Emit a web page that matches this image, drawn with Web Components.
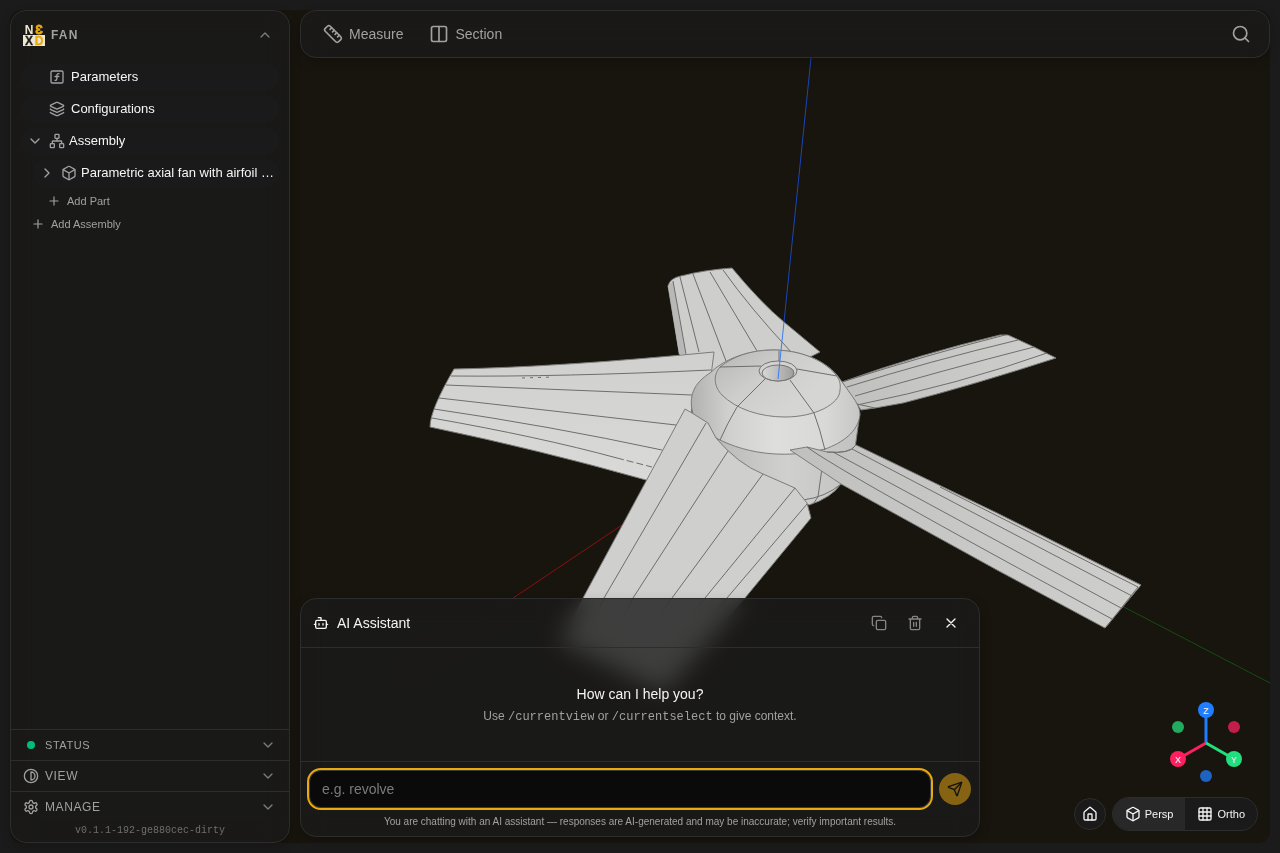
<!DOCTYPE html>
<html lang="en">
<head>
<meta charset="utf-8">
<meta name="viewport" content="width=device-width, initial-scale=1">
<title>FAN</title>
<style>
  html, body { height: 100%; margin: 0; }
  body {
    background: #1b1b1b;
    color: #f5f5f5;
    font-family: "Liberation Sans", Arial, sans-serif;
    font-size: 13px;
    --panel: rgba(26, 26, 26, .8);
    --line: #2d2d2c;
    --muted: #a1a1a1;
    --amber: #e9a90f;
  }
</style>
</head>
<body>
<cad-app></cad-app>
<script>
const define = (name, html, setup) => {
  const tpl = document.createElement('template');
  tpl.innerHTML = html;
  customElements.define(name, class extends HTMLElement {
    constructor() {
      super();
      this.attachShadow({ mode: 'open' }).append(tpl.content.cloneNode(true));
    }
    connectedCallback() { if (setup) setup(this, this.shadowRoot); }
  });
};

const BUTTON = `button{all:unset;box-sizing:border-box;cursor:pointer}button:focus-visible{outline:2px solid var(--amber)}`;
const PANEL = `box-sizing:border-box;border:1px solid var(--line);border-radius:16px;background:var(--panel);backdrop-filter:blur(12px);box-shadow:0 4px 12px rgba(0,0,0,.2);`;

const ICONS = {
  up: '<path d="m18 15-6-6-6 6"/>',
  down: '<path d="m6 9 6 6 6-6"/>',
  right: '<path d="m9 18 6-6-6-6"/>',
  plus: '<path d="M5 12h14M12 5v14"/>',
  func: '<rect width="18" height="18" x="3" y="3" rx="2"/><path d="M9 17c2 0 2.800-1 2.800-2.800V10c0-2 1-3.300 3.200-3M9 11.200h5.700"/>',
  layers: '<path d="M12.830 2.180a2 2 0 0 0-1.660 0L2.600 6.080a1 1 0 0 0 0 1.830l8.580 3.910a2 2 0 0 0 1.660 0l8.580-3.900a1 1 0 0 0 0-1.830z"/><path d="M2 12a1 1 0 0 0 .58.91l8.600 3.910a2 2 0 0 0 1.650 0l8.580-3.900A1 1 0 0 0 22 12M2 17a1 1 0 0 0 .58.91l8.600 3.910a2 2 0 0 0 1.650 0l8.580-3.900A1 1 0 0 0 22 17"/>',
  network: '<rect x="16" y="16" width="6" height="6" rx="1"/><rect x="2" y="16" width="6" height="6" rx="1"/><rect x="9" y="2" width="6" height="6" rx="1"/><path d="M5 16v-3a1 1 0 0 1 1-1h12a1 1 0 0 1 1 1v3M12 12V8"/>',
  box: '<path d="M21 8a2 2 0 0 0-1-1.730l-7-4a2 2 0 0 0-2 0l-7 4A2 2 0 0 0 3 8v8a2 2 0 0 0 1 1.730l7 4a2 2 0 0 0 2 0l7-4A2 2 0 0 0 21 16Z"/><path d="m3.300 7 8.700 5 8.700-5M12 22V12"/>',
  ruler: '<path d="M21.300 15.300a2.400 2.400 0 0 1 0 3.400l-2.600 2.600a2.400 2.400 0 0 1-3.400 0L2.700 8.700a2.410 2.410 0 0 1 0-3.400l2.600-2.600a2.410 2.410 0 0 1 3.400 0Z"/><path d="m14.500 12.500 2-2M11.500 9.500l2-2M8.500 6.500l2-2M17.500 15.500l2-2"/>',
  columns: '<rect width="18" height="18" x="3" y="3" rx="2"/><path d="M12 3v18"/>',
  search: '<circle cx="11" cy="11" r="8"/><path d="m21 21-4.300-4.300"/>',
  contrast: '<circle cx="12" cy="12" r="10"/><path d="M12 18a6 6 0 0 0 0-12v12z"/>',
  settings: '<path d="M12.220 2h-.44a2 2 0 0 0-2 2v.18a2 2 0 0 1-1 1.730l-.43.25a2 2 0 0 1-2 0l-.15-.08a2 2 0 0 0-2.730.73l-.22.38a2 2 0 0 0 .73 2.730l.15.1a2 2 0 0 1 1 1.720v.51a2 2 0 0 1-1 1.740l-.15.09a2 2 0 0 0-.73 2.730l.22.38a2 2 0 0 0 2.730.73l.15-.08a2 2 0 0 1 2 0l.43.25a2 2 0 0 1 1 1.730V20a2 2 0 0 0 2 2h.44a2 2 0 0 0 2-2v-.18a2 2 0 0 1 1-1.730l.43-.25a2 2 0 0 1 2 0l.15.08a2 2 0 0 0 2.730-.73l.22-.39a2 2 0 0 0-.73-2.730l-.15-.08a2 2 0 0 1-1-1.740v-.5a2 2 0 0 1 1-1.740l.15-.09a2 2 0 0 0 .73-2.730l-.22-.38a2 2 0 0 0-2.730-.73l-.15.08a2 2 0 0 1-2 0l-.43-.25a2 2 0 0 1-1-1.730V4a2 2 0 0 0-2-2z"/><circle cx="12" cy="12" r="3"/>',
  bot: '<path d="M12 8V4H8"/><rect width="16" height="12" x="4" y="8" rx="2"/><path d="M2 14h2M20 14h2M15 13v2M9 13v2"/>',
  copy: '<rect width="14" height="14" x="8" y="8" rx="2"/><path d="M4 16c-1.100 0-2-.9-2-2V4c0-1.100.9-2 2-2h10c1.100 0 2 .9 2 2"/>',
  trash: '<path d="M3 6h18M19 6v14c0 1-1 2-2 2H7c-1 0-2-1-2-2V6M8 6V4c0-1 1-2 2-2h4c1 0 2 1 2 2v2M10 11v6M14 11v6"/>',
  x: '<path d="M18 6 6 18M6 6l12 12"/>',
  send: '<path d="M14.536 21.686a.5.5 0 0 0 .937-.024l6.500-19a.496.496 0 0 0-.635-.635l-19 6.500a.5.5 0 0 0-.024.937l7.930 3.180a2 2 0 0 1 1.112 1.110z"/><path d="m21.854 2.147-10.940 10.939"/>',
  home: '<path d="M15 21v-8a1 1 0 0 0-1-1h-4a1 1 0 0 0-1 1v8"/><path d="M3 10a2 2 0 0 1 .709-1.528l7-5.999a2 2 0 0 1 2.582 0l7 5.999A2 2 0 0 1 21 10v9a2 2 0 0 1-2 2H5a2 2 0 0 1-2-2z"/>',
  grid: '<rect width="18" height="18" x="3" y="3" rx="2"/><path d="M3 9h18M3 15h18M9 3v18M15 3v18"/>'
};

define('ui-icon', `
<style>
  :host { display: block; flex: none; width: 16px; height: 16px; }
  :host([size="14"]) { width: 14px; height: 14px; }
  :host([size="20"]) { width: 20px; height: 20px; }
  svg { display: block; width: 100%; height: 100%; fill: none; stroke: currentColor; stroke-width: 2; stroke-linecap: round; stroke-linejoin: round; }
</style>
<svg viewBox="0 0 24 24" aria-hidden="true"></svg>`,
(el, root) => { root.querySelector('svg').innerHTML = ICONS[el.getAttribute('name')] || ''; });

define('brand-logo', `
<style>
  :host { display: block; width: 22px; height: 22px; }
  svg { display: block; overflow: visible; }
  text { font: bold 12px "Liberation Sans", Arial, sans-serif; text-anchor: middle; }
</style>
<svg width="22" height="22" viewBox="0 0 22 22" role="img" aria-label="NEXD">
  <rect y="11" width="22" height="11" fill="#efe6cf"/>
  <text x="6" y="10" fill="#efe6cf">N</text>
  <text x="16" y="10" fill="#e9a90f" stroke="#e9a90f" stroke-width=".8">Ɛ</text>
  <text x="6" y="21" fill="#1b1b1b" stroke="#1b1b1b" stroke-width=".3">X</text>
  <text x="16" y="21" fill="#e9a90f" stroke="#e9a90f" stroke-width=".3">D</text>
</svg>`);

define('tree-item', `
<style>
  :host { display: block; }
  ${BUTTON}
  button { display: flex; align-items: center; width: 100%; height: 28px; padding: 0 6px 0 7px; border-radius: 14px; background: #1a1a1a; gap: 6px; }
  .twist { width: 16px; height: 16px; }
  .main { display: flex; align-items: center; gap: 4px; min-width: 0; }
  :host([leaf]) .main { gap: 6px; }
  ui-icon { color: var(--muted); }
  .label { overflow: hidden; text-overflow: ellipsis; white-space: nowrap; line-height: 18px; }
</style>
<button type="button">
  <span class="twist"></span>
  <span class="main"><ui-icon class="kind"></ui-icon><span class="label"><slot></slot></span></span>
</button>`,
(el, root) => {
  const kind = root.querySelector('.kind');
  kind.shadowRoot.querySelector('svg').innerHTML = ICONS[el.getAttribute('icon')];
  const state = el.getAttribute('state');
  if (state) root.querySelector('.twist').innerHTML = `<ui-icon name="${state}"></ui-icon>`;
});

define('add-link', `
<style>
  :host { display: block; }
  ${BUTTON}
  button { display: flex; align-items: center; gap: 6px; height: 20px; color: var(--muted); font-size: 11px; padding-left: 11px; }
</style>
<button type="button"><ui-icon name="plus" size="14"></ui-icon><slot></slot></button>`);

define('section-row', `
<style>
  :host { display: block; border-top: 1px solid var(--line); font-size: 12px; color: var(--muted); }
  ${BUTTON}
  button { display: flex; align-items: center; gap: 6px; width: 100%; height: 30px; padding: 0 13px 0 12px; letter-spacing: .05em; }
  .mark { display: grid; place-items: center; width: 16px; }
  .label { flex: 1; }
  .chevron { color: #7c7c7a; }
</style>
<button type="button"><span class="mark"><slot name="mark"></slot></span><span class="label"><slot></slot></span><ui-icon class="chevron" name="down"></ui-icon></button>`);

define('side-panel', `
<style>
  :host { display: flex; flex-direction: column; ${PANEL} }
  ${BUTTON}
  header { display: flex; align-items: center; gap: 6px; height: 48px; padding: 0 16px 0 12px; color: var(--muted); }
  header button { color: #7c7c7a; }
  h1 { flex: 1; margin: 0; font-size: 12px; letter-spacing: .1em; }
  nav { flex: 1; display: flex; flex-direction: column; gap: 4px; padding: 4px 9px; }
  .nested { padding-left: 12px; }
  .adds { display: flex; flex-direction: column; gap: 3px; }
  .adds .deep { padding-left: 16px; }
  .dot { width: 8px; height: 8px; border-radius: 4px; background: #00bc7d; }
  .status { font-size: 11px; }
  footer p { margin: 0; height: 20px; text-align: center; color: #6f6f6d; font: 10px/18px "Liberation Mono", monospace; }
</style>
<header>
  <brand-logo></brand-logo><h1>FAN</h1>
  <button type="button" aria-label="Collapse panel"><ui-icon name="up"></ui-icon></button>
</header>
<nav aria-label="Model tree">
  <tree-item icon="func" leaf>Parameters</tree-item>
  <tree-item icon="layers" leaf>Configurations</tree-item>
  <tree-item icon="network" state="down">Assembly</tree-item>
  <tree-item icon="box" state="right" class="nested">Parametric axial fan with airfoil blades</tree-item>
  <div class="adds">
    <add-link class="deep">Add Part</add-link>
    <add-link>Add Assembly</add-link>
  </div>
</nav>
<footer>
  <section-row class="status"><span slot="mark" class="dot"></span>STATUS</section-row>
  <section-row><ui-icon slot="mark" name="contrast"></ui-icon>VIEW</section-row>
  <section-row><ui-icon slot="mark" name="settings"></ui-icon>MANAGE</section-row>
  <p>v0.1.1-192-ge880cec-dirty</p>
</footer>`);

define('tool-bar', `
<style>
  :host { display: flex; align-items: center; gap: 10px; height: 48px; padding: 0 10px 0 14px; color: var(--muted); font-size: 14px; ${PANEL} }
  ${BUTTON}
  button { display: flex; align-items: center; gap: 6px; height: 36px; padding: 0 8px; border-radius: 10px; }
  .search { margin-left: auto; }
</style>
<button type="button"><ui-icon name="ruler" size="20"></ui-icon>Measure</button>
<button type="button"><ui-icon name="columns" size="20"></ui-icon>Section</button>
<button type="button" class="search" aria-label="Search"><ui-icon name="search" size="20"></ui-icon></button>`);

define('chat-panel', `
<style>
  :host { display: block; ${PANEL} }
  ${BUTTON}
  header { display: flex; align-items: center; gap: 8px; height: 48px; padding: 0 14px 0 12px; border-bottom: 1px solid var(--line); }
  h2 { flex: 1; margin: 0; font-size: 14px; font-weight: 400; }
  header button { display: grid; place-items: center; width: 28px; height: 28px; color: #858583; }
  header button.close { color: #f5f5f5; }
  .intro { display: flex; flex-direction: column; align-items: center; justify-content: center; gap: 2px; height: 113px; text-align: center; }
  .intro p { margin: 0; font-size: 14px; line-height: 20px; }
  .intro p + p { font-size: 12px; color: var(--muted); }
  code { font: 12px "Liberation Mono", monospace; }
  footer { border-top: 1px solid var(--line); padding: 8px 8px 7px; }
  form { display: flex; align-items: center; gap: 8px; }
  input { flex: 1; min-width: 0; box-sizing: border-box; height: 38px; padding: 0 12px; border: 1px solid #3a3a38; border-radius: 12px; outline: 2px solid var(--amber); background: #0a0a0a; color: #f5f5f5; font: 14px "Liberation Sans", Arial, sans-serif; }
  input::placeholder { color: #7b7b7b; opacity: 1; }
  .send { display: grid; place-items: center; width: 32px; height: 32px; border-radius: 16px; background: #856312; color: #141310; }
  small { display: block; margin-top: 7px; font-size: 10px; line-height: 14px; text-align: center; color: var(--muted); }
</style>
<header>
  <ui-icon name="bot"></ui-icon><h2>AI Assistant</h2>
  <button type="button" aria-label="Copy conversation"><ui-icon name="copy"></ui-icon></button>
  <button type="button" aria-label="Delete conversation"><ui-icon name="trash"></ui-icon></button>
  <button type="button" class="close" aria-label="Close"><ui-icon name="x"></ui-icon></button>
</header>
<div class="intro">
  <p>How can I help you?</p>
  <p>Use <code>/currentview</code> or <code>/currentselect</code> to give context.</p>
</div>
<footer>
  <form>
    <input type="text" placeholder="e.g. revolve" aria-label="Message">
    <button type="button" class="send" aria-label="Send"><ui-icon name="send"></ui-icon></button>
  </form>
  <small>You are chatting with an AI assistant — responses are AI-generated and may be inaccurate; verify important results.</small>
</footer>`);

define('axis-gizmo', `
<style>
  :host { display: block; padding-right: 12px; }
  svg { display: block; }
  text { font: bold 9px "Liberation Sans", Arial, sans-serif; fill: #d6dcea; text-anchor: middle; }
</style>
<svg width="80" height="88" viewBox="0 0 80 88" role="img" aria-label="View orientation">
  <circle cx="12" cy="26" r="6" fill="#20ab5e"/><circle cx="68" cy="26" r="6" fill="#c21d4b"/><circle cx="40" cy="75" r="6" fill="#1f63c0"/>
  <g stroke-width="3"><path d="M40 42V10" stroke="#1f7dff"/><path d="M40 42 12 58" stroke="#ff1f5e"/><path d="m40 42 28 16" stroke="#1fe07c"/></g>
  <circle cx="40" cy="9" r="8" fill="#1f7dff"/><circle cx="12" cy="58" r="8" fill="#ff1f5e"/><circle cx="68" cy="58" r="8" fill="#1fe07c"/>
  <text x="40" y="13">Z</text><text x="12" y="62">X</text><text x="68" y="62">Y</text>
</svg>`);

define('view-dock', `
<style>
  :host { display: flex; flex-direction: column; align-items: flex-end; gap: 8px; font-size: 11px; }
  ${BUTTON}
  .row { display: flex; align-items: center; gap: 6px; }
  .home { display: grid; place-items: center; width: 32px; height: 32px; border: 1px solid var(--line); border-radius: 16px; background: #1a1a1a; }
  .modes { display: flex; overflow: hidden; border: 1px solid var(--line); border-radius: 17px; background: #1a1a1a; }
  .modes button { display: flex; align-items: center; gap: 4px; height: 32px; padding: 0 12px; }
  .modes .on { background: #282828; }
</style>
<axis-gizmo></axis-gizmo>
<div class="row">
  <button type="button" class="home" aria-label="Home view"><ui-icon name="home"></ui-icon></button>
  <div class="modes">
    <button type="button" class="on" aria-pressed="true"><ui-icon name="box"></ui-icon>Persp</button>
    <button type="button" aria-pressed="false"><ui-icon name="grid"></ui-icon>Ortho</button>
  </div>
</div>`);

define('fan-scene', `
<style>
  :host { display: block; overflow: hidden; border-radius: 12px; background: #18140e; }
  svg { display: block; width: 100%; height: 100%; }
  .body { stroke: #7c7c7a; stroke-width: 1; stroke-linejoin: round; }
  .edge { fill: none; stroke: #6e6e6c; stroke-width: 1; }
</style>
<svg viewBox="10 10 1260 833" preserveAspectRatio="xMidYMid slice" role="img" aria-label="Fan model">
  <defs>
    <linearGradient id="dome" x1="692" x2="860" y1="0" y2="0" gradientUnits="userSpaceOnUse"><stop offset="0" stop-color="#b2b2b0"/><stop offset=".22" stop-color="#d0d0ce"/><stop offset=".5" stop-color="#dededc"/><stop offset=".8" stop-color="#d8d8d6"/><stop offset="1" stop-color="#c6c6c4"/></linearGradient>
    <linearGradient id="cap" x1="730" y1="355" x2="775" y2="417" gradientUnits="userSpaceOnUse"><stop offset="0" stop-color="#bcbcba"/><stop offset=".5" stop-color="#cececc"/><stop offset="1" stop-color="#d5d5d3"/></linearGradient>
    <linearGradient id="base" x1="716" x2="858" y1="0" y2="0" gradientUnits="userSpaceOnUse"><stop offset="0" stop-color="#bababa"/><stop offset=".5" stop-color="#d0d0ce"/><stop offset="1" stop-color="#c2c2c0"/></linearGradient>
    <linearGradient id="bore"><stop offset="0" stop-color="#d8d8d6"/><stop offset="1" stop-color="#9e9e9c"/></linearGradient>
    <linearGradient id="left" x1="0" y1="0" x2="0" y2="1"><stop offset="0" stop-color="#d0d0ce"/><stop offset="1" stop-color="#dadad8"/></linearGradient>
    <linearGradient id="arm"><stop offset="0" stop-color="#c0c0be"/><stop offset=".5" stop-color="#c8c8c6"/><stop offset="1" stop-color="#cececc"/></linearGradient>
  </defs>
  <path d="M622 525 400 674" stroke="#8c1010"/>
  <path d="M1120 605 1270 683" stroke="#124f12"/>

  <path class="body" fill="#cececc" d="M680 358 668 286Q670 278 681 276 704 270 732 268 762 304 784 322L820 352 808 358 790 375H700Z"/>
  <path fill="#b8b8b6" d="M668 286 673 281 686 354H679Z"/>
  <path class="edge" d="M673 281 686 354M680 277 699 352M693 274 726 361M710 272 757 351M723 270Q750 308 792 353"/>

  <path class="body" fill="url(#arm)" d="M842 382Q920 354 1000 335L1008 335 1034 347 1056 358Q970 386 903 403L875 408 861 410Z"/>
  <path class="edge" d="M842 382Q930 354 1005 335M847 387Q930 361 1018 340M855 396Q940 371 1034 347M857 405Q960 384 1047 353M857 404 875 408"/>

  <path class="body" fill="url(#left)" d="M454 369Q560 367 714 352L711 376 692 402 686 490 646 480Q540 450 430 427 430 410 454 369Z"/>
  <path class="edge" d="M451 376Q560 377 711 370M446 385 692 395M439 398 676 425M434 409Q550 426 662 450M432 418Q540 437 617 458"/>
  <path class="edge" stroke-dasharray="7 3" d="M617 458 652 467"/>
  <path class="edge" stroke-dasharray="3 5" d="M522 378 553 377"/>

  <path class="body" fill="url(#base)" d="M700 425 716 438 859 420 855 448 841 484Q831 498 809 505L780 490 720 460Z"/>
  <path class="edge" d="M822 468 818 497M803 500Q826 497 841 484M813 504 818 497"/>
  <path class="body" fill="url(#dome)" d="M693 414C688 396 694 383 710 373 725 358 750 350 773 350 800 350 824 360 837 375L850 393C858 404 860 409 860 415 858 432 842 443 825 449 790 458 750 456 716 438Z"/>
  <path fill="url(#cap)" class="body" d="M720 367C712 376 715 388 722 395 736 409 760 417 785 417 815 417 840 404 840 390 841 383 839 379 836 375 824 360 800 350 773 350 750 350 732 357 720 367Z"/>
  <path class="edge" d="M720 367 761 366M766 378 737 407Q727 424 720 440M790 380 814 413Q820 429 825 450M797 369 837 376M779 351V361"/>
  <ellipse cx="778" cy="371" rx="19" ry="10" fill="#d2d2d0" stroke="#747472"/>
  <ellipse cx="778" cy="373" rx="16" ry="8" fill="url(#bore)" stroke="#747472"/>

  <path class="body" fill="url(#arm)" d="M790 450 807 447 827 452Q850 454 856 445L997 513 1141 585 1105 628 997 570 841 484Z"/>
  <path class="edge" d="M852 449 1132 596M833 452 1121 608M807 447Q840 472 1112 619M940 487 1138 587 1107 626M827 452Q850 454 855 446"/>

  <path class="body" fill="#cfcfcd" d="M685 409 692 413 708 423 716 438Q738 464 763 474L795 488 807 503 811 518 745 598 665 692 560 642 583 598Z"/>
  <path class="edge" d="M706 423 604 598 580 650M728 451 633 598 602 660M763 474 672 598 620 668M795 488 705 598 640 678M807 504 727 598 655 686"/>

  <path d="M811 58 784 322" stroke="#1b46b8"/>
  <path d="M784 322 778 379" stroke="#3d7ef2"/>
</svg>`);

define('cad-app', `
<style>
  :host { display: grid; grid-template-columns: 280px minmax(0, 1fr); gap: 10px; box-sizing: border-box; min-height: 100vh; padding: 10px; position: relative; }
  fan-scene { position: absolute; inset: 10px; }
  side-panel, main { position: relative; }
  main { display: flex; flex-direction: column; justify-content: space-between; }
  .bottom { display: flex; justify-content: space-between; align-items: flex-end; gap: 12px; }
  chat-panel { flex: 0 1 680px; min-width: 0; margin-bottom: 6px; }
  view-dock { padding: 0 12px 12px 0; }
</style>
<fan-scene></fan-scene>
<side-panel></side-panel>
<main>
  <tool-bar></tool-bar>
  <div class="bottom"><chat-panel></chat-panel><view-dock></view-dock></div>
</main>`);
</script>
</body>
</html>
